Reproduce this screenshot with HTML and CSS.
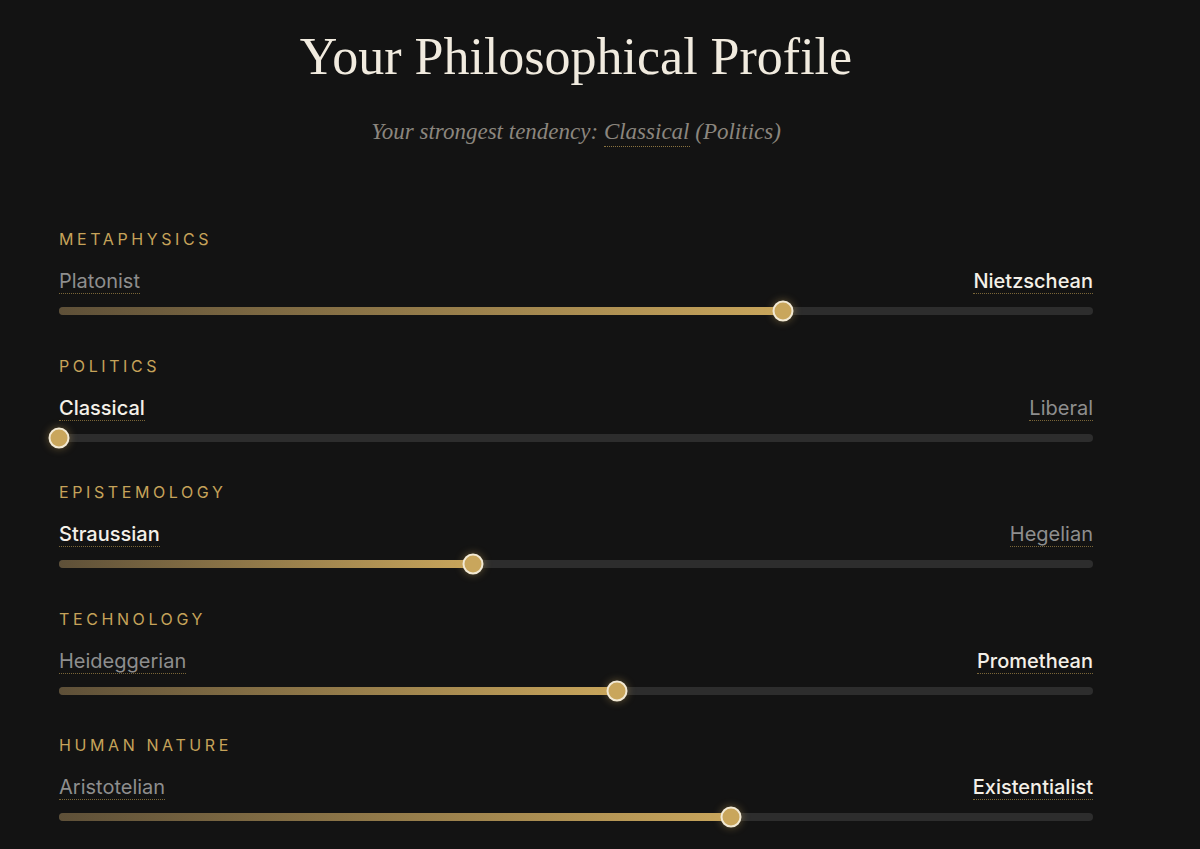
FILE: index.html
```html
<!DOCTYPE html>
<html lang="en">
<head>
<meta charset="utf-8">
<title>Your Philosophical Profile</title>
<link rel="stylesheet" href="styles.css">
</head>
<body>
<main class="profile">
  <header class="head">
    <h1 class="title">Your Philosophical Profile</h1>
    <p class="subtitle">Your strongest tendency: <span class="dotted">Classical</span> (Politics)</p>
  </header>

  <section class="axis">
    <div class="cat">Metaphysics</div>
    <div class="ends"><span class="end">Platonist</span><span class="end on">Nietzschean</span></div>
    <div class="track"><div class="fill" style="width:70%"></div><div class="thumb" style="left:70%"></div></div>
  </section>

  <section class="axis">
    <div class="cat">Politics</div>
    <div class="ends"><span class="end on">Classical</span><span class="end">Liberal</span></div>
    <div class="track"><div class="fill" style="width:0%"></div><div class="thumb" style="left:0%"></div></div>
  </section>

  <section class="axis">
    <div class="cat">Epistemology</div>
    <div class="ends"><span class="end on">Straussian</span><span class="end">Hegelian</span></div>
    <div class="track"><div class="fill" style="width:40%"></div><div class="thumb" style="left:40%"></div></div>
  </section>

  <section class="axis">
    <div class="cat">Technology</div>
    <div class="ends"><span class="end">Heideggerian</span><span class="end on">Promethean</span></div>
    <div class="track"><div class="fill" style="width:54%"></div><div class="thumb" style="left:54%"></div></div>
  </section>

  <section class="axis">
    <div class="cat">Human Nature</div>
    <div class="ends"><span class="end">Aristotelian</span><span class="end on">Existentialist</span></div>
    <div class="track"><div class="fill" style="width:65%"></div><div class="thumb" style="left:65%"></div></div>
  </section>
</main>
</body>
</html>
```

FILE: styles.css
```css
html, body {
  margin: 0;
  padding: 0;
  background: #131313;
  height: 100%;
  overflow: hidden;
}
body {
  font-family: Inter, "Liberation Sans", sans-serif;
  color: #ece6da;
}
.profile {
  width: 1034px;
  margin-left: 59px;
}
.head {
  text-align: center;
  padding-top: 25px;
  height: 229px;
  box-sizing: border-box;
}
.title {
  margin: 0;
  font-family: "Liberation Serif", "DejaVu Serif", serif;
  font-weight: 400;
  font-size: 52px;
  line-height: 64px;
  color: #f1ebdf;
}
.subtitle {
  margin: 28px 0 0;
  font-family: "Liberation Serif", serif;
  font-style: italic;
  font-size: 23px;
  line-height: 30px;
  color: #8b867e;
}
.dotted {
  border-bottom: 1px dotted #8a7340;
  padding-bottom: 2px;
}
.axis {
  margin-bottom: 40.5px;
}
.cat {
  font-size: 16px;
  line-height: 20px;
  letter-spacing: 3.6px;
  text-transform: uppercase;
  color: #c6a35a;
  font-weight: 400;
}
.ends {
  display: flex;
  justify-content: space-between;
  margin-top: 20px;
  height: 24px;
  font-size: 20px;
  line-height: 24px;
}
.end {
  color: #8e8e8e;
  border-bottom: 1px dotted #7a6638;
  padding-bottom: 0;
  height: 24px;
}
.end.on {
  color: #f4f0e8;
  font-weight: 500;
}
.track {
  position: relative;
  margin-top: 14px;
  height: 8px;
  border-radius: 4px;
  background: #2d2d2d;
}
.fill {
  height: 100%;
  border-radius: 4px;
  background: linear-gradient(90deg, #5e5038 0%, #c9a65c 100%);
}
.thumb {
  position: absolute;
  top: 50%;
  width: 17px;
  height: 17px;
  border: 2.5px solid #f2e9d4;
  border-radius: 50%;
  background: #c9a65c;
  transform: translate(-50%, -50%);
  box-shadow: 0 0 8px rgba(201, 166, 92, 0.45);
}
```
